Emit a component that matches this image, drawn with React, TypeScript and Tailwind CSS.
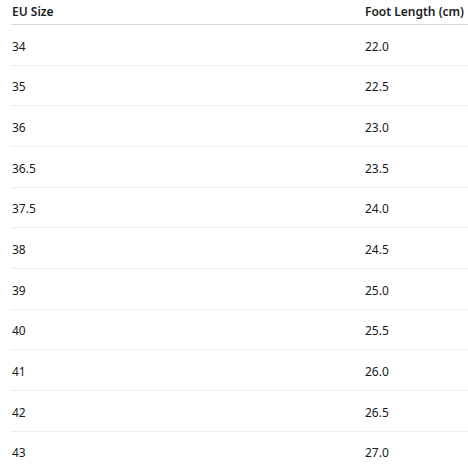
import React from "react";

const rows: [string, string][] = [
  ["34", "22.0"],
  ["35", "22.5"],
  ["36", "23.0"],
  ["36.5", "23.5"],
  ["37.5", "24.0"],
  ["38", "24.5"],
  ["39", "25.0"],
  ["40", "25.5"],
  ["41", "26.0"],
  ["42", "26.5"],
  ["43", "27.0"],
];

export default function App() {
  return (
    <div
      className="w-[468px] h-[464px] overflow-hidden bg-white text-[#1a1a1a] pl-[11px]"
      style={{ fontFamily: '"Noto Sans", "Open Sans", sans-serif' }}
    >
      <table className="w-[470px] border-collapse text-[12px] text-left">
        <thead>
          <tr className="border-b border-[#dadada]">
            <th className="w-[354px] p-0 pl-px pt-[4px] pb-[4px] leading-[16px] font-semibold">EU Size</th>
            <th className="p-0 pt-[4px] pb-[4px] leading-[16px] font-semibold">Foot Length (cm)</th>
          </tr>
        </thead>
        <tbody>
          {rows.map(([eu, cm]) => (
            <tr key={eu} className="border-b border-[#eeeeee]">
              <td className="p-0 pl-px pt-[13.5px] pb-[10.5px] leading-[15.67px]">{eu}</td>
              <td className="p-0 pt-[13.5px] pb-[10.5px] leading-[15.67px]">{cm}</td>
            </tr>
          ))}
        </tbody>
      </table>
    </div>
  );
}
